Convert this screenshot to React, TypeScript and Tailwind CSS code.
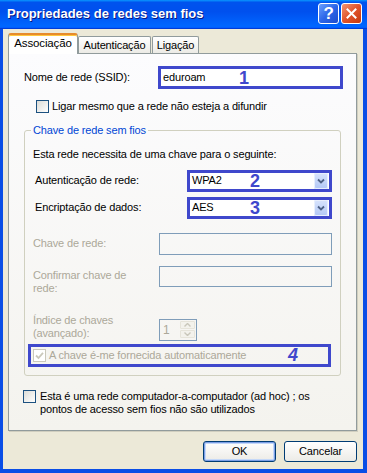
import React from "react"

function Check({ checked = false, disabled = false }: { checked?: boolean; disabled?: boolean }) {
  return (
    <span
      className={
        disabled
          ? "flex h-[13px] w-[13px] shrink-0 items-center justify-center border border-[#cac8bb] bg-white"
          : "flex h-[13px] w-[13px] shrink-0 items-center justify-center border border-[#1c5180] bg-gradient-to-br from-[#dcdcd7] to-white"
      }
    >
      {checked && (
        <svg width="9" height="9" viewBox="0 0 9 9">
          <path d="M1 4.5 L3.5 7 L8 1.8" fill="none" stroke={disabled ? "#cac8bb" : "#21a121"} strokeWidth="1.8" />
        </svg>
      )}
    </span>
  )
}

function Combo({ value, mark }: { value: string; mark: string }) {
  return (
    <div className="flex h-[22px] w-[145px] items-center border-[3px] border-[#3f48cc] bg-white">
      <span className="w-[60px] pl-[2px]">{value}</span>
      <span className="flex-1 text-[18px] font-bold leading-none tracking-normal text-[#3f48cc]">{mark}</span>
      <span className="mr-px flex h-[16px] w-[14px] items-center justify-center rounded-[2px] bg-gradient-to-b from-[#d8e4fd] to-[#b2c7f5] shadow-[inset_0_0_0_1px_#e8effd]">
        <svg width="8" height="6" viewBox="0 0 8 6">
          <path d="M1 1.5 L4 4.5 L7 1.5" fill="none" stroke="#4d6185" strokeWidth="1.8" />
        </svg>
      </span>
    </div>
  )
}

export default function App() {
  return (
    <div className="flex h-[473px] w-[367px] flex-col bg-[#0a4ee6] font-['Liberation_Sans',Arial,sans-serif] text-[11px] tracking-[-0.15px] text-black">
      {/* title bar */}
      <div className="flex h-[29px] items-center pb-[2px] pl-[7px] pr-[5px] bg-[linear-gradient(180deg,#0997ff,#0053ee_8%,#0050ee_40%,#0066ff_88%,#0066ff_93%,#005bff_95%,#003dd7_96%,#003dd7)]">
        <span className="flex-1 text-[13px] font-bold tracking-normal text-white [text-shadow:1px_1px_#0a1883]">
          Propriedades de redes sem fios
        </span>
        <span className="flex h-[21px] w-[21px] items-center justify-center rounded-[3px] border border-white bg-[linear-gradient(135deg,#6aa0ff,#2d66e8_50%,#1d4cce)] text-[17px] font-bold leading-none text-white">
          ?
        </span>
        <span className="ml-[2px] flex h-[21px] w-[21px] items-center justify-center rounded-[3px] border border-white bg-[linear-gradient(135deg,#f29572,#e0532b_50%,#c4380f)]">
          <svg width="11" height="11" viewBox="0 0 11 11">
            <path d="M1.5 1.5 L9.5 9.5 M9.5 1.5 L1.5 9.5" stroke="white" strokeWidth="2" strokeLinecap="square" />
          </svg>
        </span>
      </div>

      {/* client area */}
      <div className="mb-[4px] ml-[3px] mr-[4px] flex flex-1 flex-col bg-[#ece9d8]">
        {/* tabs */}
        <div className="flex h-[24px] items-end pl-[5px]">
          <div className="relative z-10 -mb-px flex h-[21px] w-[70px] items-center justify-center rounded-t-[3px] border-x border-t-2 border-x-[#919b9c] border-t-[#e68b2c] bg-white pb-[2px] text-[11.5px] shadow-[inset_0_1px_0_#ffc73c]">
            Associação
          </div>
          <div className="flex h-[17px] w-[73px] items-center justify-center rounded-t-[2px] border border-b-0 border-[#919b9c] bg-gradient-to-b from-white to-[#ecebe6]">
            Autenticação
          </div>
          <div className="ml-px flex h-[17px] w-[47px] items-center justify-center rounded-t-[2px] border border-b-0 border-[#919b9c] bg-gradient-to-b from-white to-[#ecebe6]">
            Ligação
          </div>
        </div>

        {/* panel */}
        <div className="ml-[5px] mr-[6px] flex h-[378px] flex-col border border-[#919b9c] bg-gradient-to-b from-[#fcfcfe] to-[#f4f3ee] shadow-[1px_1px_0_#d0cebf]">
          <div className="mt-[12px] flex items-center pl-[15px]">
            <span className="w-[134px]">Nome de rede (SSID):</span>
            <div className="flex h-[23px] w-[185px] items-center border-[3px] border-[#3f48cc] bg-white">
              <span className="w-[78px] pl-[2px]">eduroam</span>
              <span className="text-[18px] font-bold leading-none text-[#3f48cc]">1</span>
            </div>
          </div>

          <div className="mt-[9px] flex items-center gap-[3px] pl-[27px]">
            <Check />
            <span>Ligar mesmo que a rede não esteja a difundir</span>
          </div>

          <fieldset className="ml-[15px] mt-[9px] w-[317px] rounded-[3px] border border-[#d0d0bf] pb-[8px]">
            <legend className="ml-[6px] px-[2px] leading-[13px] text-[#0046d5]">Chave de rede sem fios</legend>
            <div className="flex flex-col pl-[8px]">
              <span className="mt-[11px] leading-[13px]">Esta rede necessita de uma chave para o seguinte:</span>

              <div className="mt-[9px] flex items-center">
                <span className="w-[154px] pl-[2px]">Autenticação de rede:</span>
                <Combo value="WPA2" mark="2" />
              </div>
              <div className="mt-[5px] flex items-center">
                <span className="w-[154px] pl-[2px]">Encriptação de dados:</span>
                <Combo value="AES" mark="3" />
              </div>

              <div className="mt-[14px] flex items-center text-[#aca899]">
                <span className="w-[126px]">Chave de rede:</span>
                <div className="h-[22px] w-[173px] border border-[#7f9db9]" />
              </div>

              <div className="mt-[11px] flex items-start text-[#aca899]">
                <span className="mt-[3px] w-[126px] leading-[13px]">
                  Confirmar chave de
                  <br />
                  rede:
                </span>
                <div className="h-[21px] w-[173px] border border-[#7f9db9]" />
              </div>

              <div className="mt-[19px] flex items-start text-[#aca899]">
                <span className="w-[126px] leading-[13px]">
                  Índice de chaves
                  <br />
                  (avançado):
                </span>
                <div className="mt-[5px] flex h-[22px] w-[38px] items-center border border-[#7f9db9]">
                  <span className="flex-1 pl-[3px] text-[12px]">1</span>
                  <div className="mr-px flex w-[15px] flex-col gap-px">
                    <span className="flex h-[8px] items-center justify-center rounded-[1px] border border-[#e6e4da] bg-[#f3f2ec]">
                      <svg width="7" height="4" viewBox="0 0 7 4">
                        <path d="M0.5 3.5 L3.5 0.5 L6.5 3.5" fill="none" stroke="#c9c7ba" strokeWidth="1.4" />
                      </svg>
                    </span>
                    <span className="flex h-[8px] items-center justify-center rounded-[1px] border border-[#e6e4da] bg-[#f3f2ec]">
                      <svg width="7" height="4" viewBox="0 0 7 4">
                        <path d="M0.5 0.5 L3.5 3.5 L6.5 0.5" fill="none" stroke="#c9c7ba" strokeWidth="1.4" />
                      </svg>
                    </span>
                  </div>
                </div>
              </div>

              <div className="-ml-[5px] mt-[3px] flex h-[23px] w-[303px] items-center border-[3px] border-[#3f48cc] pl-[2px]">
                <Check checked disabled />
                <span className="ml-[3px] w-[239px] text-[#aca899]">A chave é-me fornecida automaticamente</span>
                <span className="text-[18px] font-bold italic leading-none text-[#3f48cc]">4</span>
              </div>
            </div>
          </fieldset>

          <div className="mt-[14px] flex items-start gap-[4px] pl-[14px]">
            <Check />
            <span className="leading-[13px]">
              Esta é uma rede computador-a-computador (ad hoc) ; os
              <br />
              pontos de acesso sem fios não são utilizados
            </span>
          </div>
        </div>

        {/* buttons */}
        <div className="mr-[6px] mt-[10px] flex justify-end gap-[8px]">
          <button className="h-[21px] w-[73px] rounded-[3px] border border-[#003c74] bg-gradient-to-b from-white to-[#ecebe6] shadow-[inset_0_0_0_1px_#7b9ee6,inset_0_0_0_2px_#c4d8f8]">
            OK
          </button>
          <button className="h-[21px] w-[73px] rounded-[3px] border border-[#003c74] bg-gradient-to-b from-white to-[#ecebe6]">
            Cancelar
          </button>
        </div>
      </div>
    </div>
  )
}
